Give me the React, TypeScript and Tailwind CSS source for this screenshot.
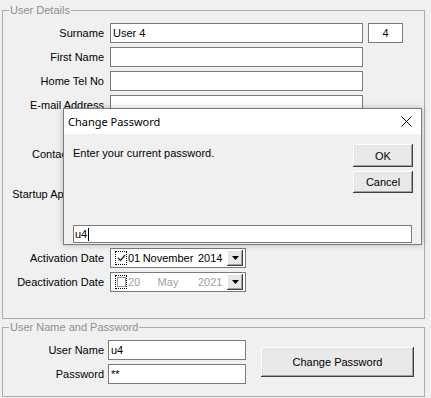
const Box = ({ w, children, className = '' }: { w: string; children?: React.ReactNode; className?: string }) => (
  <div className={`flex h-5 items-center border border-[#7a7a7a] bg-white pl-[2px] ${w} ${className}`}>{children}</div>
)

const Row = ({ label, children, className = '' }: { label: string; children?: React.ReactNode; className?: string }) => (
  <div className={`flex h-5 items-center ${className}`}>
    <span className="w-[101px] shrink-0 text-right">{label}</span>
    <div className="ml-[6px] flex items-center">{children}</div>
  </div>
)

const raised =
  'bg-[#e9e9e9] shadow-[inset_-1px_-1px_#404040,inset_1px_1px_#ffffff,inset_-2px_-2px_#a0a0a0,inset_2px_2px_#e3e3e3]'

function DateBox({ checked, day, month, year }: { checked: boolean; day: string; month: string; year: string }) {
  const dim = checked ? '' : 'text-[#a0a0a0]'
  return (
    <div className="flex h-5 w-[136px] items-center border border-[#7a7a7a] bg-white">
      <span className="ml-[4px] flex h-[14px] w-[12px] items-center justify-center border border-dotted border-black">
        {checked ? (
          <svg width="9" height="8" viewBox="0 0 9 8">
            <path d="M1 4l2.5 2.5L8 1" fill="none" stroke="#333" strokeWidth="1.5" />
          </svg>
        ) : (
          <span className="h-[10px] w-[9px] border border-[#9a9a9a] bg-white" />
        )}
      </span>
      <span className={`ml-[1px] w-[11px] ${dim}`}>{day}</span>
      <span className={`w-[58px] text-center ${dim}`}>{month}</span>
      <span className={`w-[28px] pl-[1px] ${dim}`}>{year}</span>
      <span className={`ml-auto mr-[2px] flex h-[16px] w-[16px] items-center justify-center ${raised}`}>
        <svg width="7" height="4" viewBox="0 0 7 4">
          <path d="M0 0h7L3.5 4z" fill="#000" />
        </svg>
      </span>
    </div>
  )
}

export default function App() {
  return (
    <div className="relative h-[398px] w-[431px] overflow-hidden bg-[#f0f0f0] font-['Liberation_Sans',Arial,sans-serif] text-[11px] leading-[14px] text-black">
      <fieldset className="mx-[2px] mt-[3px] h-[316px] w-[423px] border border-[#acacac] pt-[6px]">
        <legend className="ml-[6px] px-[1px] text-[#8f8f8f]">User Details</legend>
        <div className="flex flex-col gap-[4px]">
          <Row label="Surname">
            <Box w="w-[253px]">User 4</Box>
            <div className="ml-[5px] flex h-5 w-[35px] items-center justify-center border border-[#7a7a7a] bg-white">4</div>
          </Row>
          <Row label="First Name">
            <Box w="w-[253px]" />
          </Row>
          <Row label="Home Tel No">
            <Box w="w-[253px]" />
          </Row>
          <Row label="E-mail Address">
            <Box w="w-[253px]" />
          </Row>
          <Row label="Contact Tel No" className="mt-[25px]">
            <Box w="w-[253px]" />
          </Row>
          <Row label="Startup Application" className="mt-[16px]">
            <Box w="w-[253px]" />
          </Row>
          <Row label="Activation Date" className="mt-[40px]">
            <DateBox checked day="01" month="November" year="2014" />
          </Row>
          <Row label="Deactivation Date">
            <DateBox checked={false} day="20" month="May" year="2021" />
          </Row>
        </div>
      </fieldset>

      <fieldset className="mx-[2px] mt-[1px] h-[77px] w-[423px] border border-[#acacac] pt-[6px]">
        <legend className="ml-[6px] px-[1px] text-[#8f8f8f]">User Name and Password</legend>
        <div className="flex items-center">
          <div className="flex flex-col gap-[4px]">
            <div className="flex h-5 items-center">
              <span className="w-[101px] text-right">User Name</span>
              <Box w="ml-[4px] w-[138px]">u4</Box>
            </div>
            <div className="flex h-5 items-center">
              <span className="w-[101px] text-right">Password</span>
              <Box w="ml-[4px] w-[138px]">**</Box>
            </div>
          </div>
          <button className={`ml-[15px] h-[30px] w-[153px] text-[11px] ${raised}`}>Change Password</button>
        </div>
      </fieldset>

      <div className="absolute left-[63px] top-[108px] flex h-[137px] w-[359px] flex-col border border-[#7c7c7c] bg-[#f0f0f0] shadow-[0_0_6px_rgba(0,0,0,0.25)]">
        <div className="flex h-[25px] items-center justify-between bg-white pl-[4px] pr-[9px] font-['Noto_Sans',sans-serif] text-[11px]">
          <span>Change Password</span>
          <svg width="11" height="11" viewBox="0 0 11 11">
            <path d="M0.5 0.5l10 10M10.5 0.5l-10 10" stroke="#000" strokeWidth="1" />
          </svg>
        </div>
        <div className="flex flex-1 flex-col pb-[1px] pl-[9px] pr-[8px] pt-[10px]">
          <div className="flex justify-between">
            <span className="mt-[2px]">Enter your current password.</span>
            <div className="flex flex-col gap-[4px]">
              <button className={`h-[23px] w-[60px] text-[11px] ${raised}`}>OK</button>
              <button className={`h-[22px] w-[60px] text-[11px] ${raised}`}>Cancel</button>
            </div>
          </div>
          <div className="mr-[1px] mt-auto flex h-[18px] items-center border border-[#7a7a7a] bg-white pl-[1px]">
            u4<span className="ml-[1px] h-[13px] w-[1px] bg-black" />
          </div>
        </div>
      </div>
    </div>
  )
}
